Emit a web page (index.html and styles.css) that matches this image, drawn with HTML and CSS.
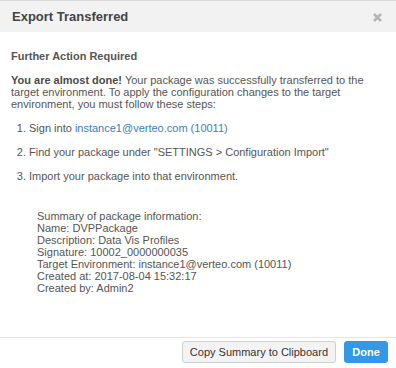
FILE: index.html
```html
<!DOCTYPE html>
<html lang="en">
<head>
  <meta charset="UTF-8">
  <title>Export Transferred</title>
  <link rel="stylesheet" href="styles.css">
</head>
<body>
  <div class="dialog">
    <div class="dialog-header">
      <h1>Export Transferred</h1>
      <svg class="close" width="9" height="9" viewBox="0 0 9 9">
        <path d="M1 1 L8 8 M8 1 L1 8" stroke="#b5b5b5" stroke-width="2.6"/>
      </svg>
    </div>

    <div class="dialog-body">
      <h2>Further Action Required</h2>
      <p class="intro"><b>You are almost done!</b> Your package was successfully transferred to the target environment. To apply the configuration changes to the target environment, you must follow these steps:</p>

      <ol class="steps">
        <li>Sign into <a href="#">instance1@verteo.com (10011)</a></li>
        <li>Find your package under "SETTINGS &gt; Configuration Import"</li>
        <li>Import your package into that environment.</li>
      </ol>

      <div class="summary">
        <div>Summary of package information:</div>
        <div>Name: DVPPackage</div>
        <div>Description: Data Vis Profiles</div>
        <div>Signature: 10002_0000000035</div>
        <div>Target Environment: instance1@verteo.com (10011)</div>
        <div>Created at: 2017-08-04 15:32:17</div>
        <div>Created by: Admin2</div>
      </div>
    </div>

    <div class="dialog-footer">
      <button class="btn">Copy Summary to Clipboard</button>
      <button class="btn btn-primary">Done</button>
    </div>
  </div>
</body>
</html>
```

FILE: styles.css
```css
body {
  margin: 0;
  background: #fff;
  font-family: "Liberation Sans", Arial, sans-serif;
  color: #555;
}
.dialog {
  display: flex;
  flex-direction: column;
  height: 368px;
  border-top: 1px solid #d9d9d9;
  box-sizing: border-box;
  overflow: hidden;
}
.dialog-header {
  display: flex;
  align-items: center;
  justify-content: space-between;
  height: 31px;
  padding: 0 14px 0 12px;
  background: #f2f2f2;
}
.dialog-header h1 {
  margin: 0;
  font-size: 13px;
  font-weight: bold;
  color: #444;
}
.close {
  margin-top: 1px;
}
.dialog-body {
  flex: 1;
  padding: 18px 26px 0 11px;
  font-size: 11px;
  line-height: 12px;
}
.dialog-body h2 {
  margin: 0 0 12px;
  font-size: 11px;
  font-weight: bold;
  color: #555;
}
.intro {
  margin: 0 0 12px;
}
.intro b {
  color: #4a4a4a;
}
.steps {
  margin: 0;
  padding-left: 18px;
}
.steps li {
  margin-bottom: 12px;
}
.steps a {
  color: #3b7dc0;
  text-decoration: none;
}
.summary {
  margin-top: 28px;
  padding-left: 26px;
  white-space: nowrap;
}
.dialog-footer {
  display: flex;
  justify-content: flex-end;
  gap: 8px;
  padding: 3px 8px 5px;
  border-top: 1px solid #e6e6e6;
}
.btn {
  height: 22px;
  padding: 0 7px;
  font-family: "Liberation Sans", Arial, sans-serif;
  font-size: 11px;
  color: #333;
  background: #f3f3f3;
  border: 1px solid #cfcfcf;
  border-radius: 3px;
}
.btn-primary {
  width: 44px;
  padding: 0;
  background: #3399e6;
  border-color: #3399e6;
  color: #fff;
  font-weight: bold;
}
```
